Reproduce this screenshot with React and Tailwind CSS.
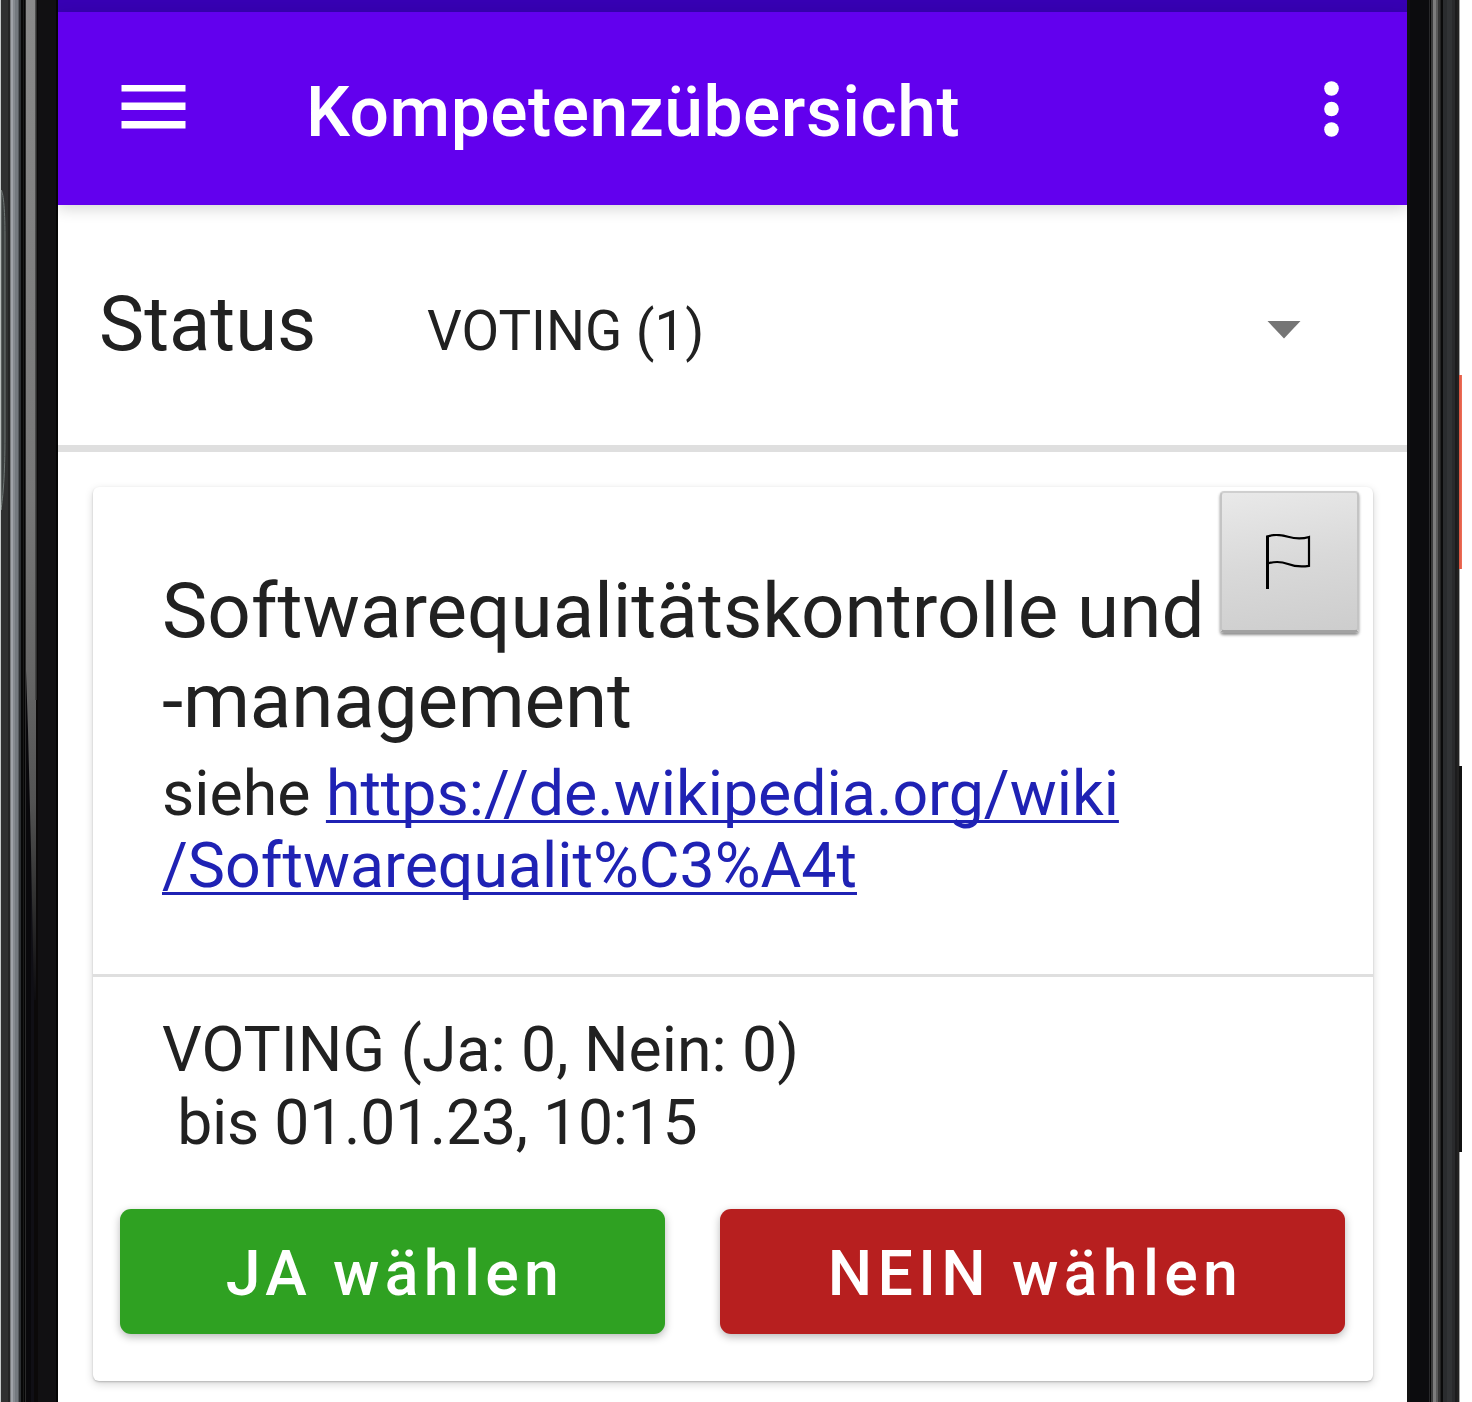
import React from "react";

function LeftBezel() {
  return (
    <div className="relative h-full w-[58px] shrink-0 bg-[linear-gradient(90deg,#c4c8c8_0_1px,#303131_1px_8px,#242525_8px_10px,#77797c_10px_11px,#9fa2a8_11px_13px,#85898f_13px_15px,#74797f_15px_18px,#565a5f_18px_19px,#2b2e31_19px_21px,#070707_21px_23px,#191919_23px_24px,#050505_24px_25px,#2a2a2a_25px_26px,#09080b_26px_31px,#100f15_31px_34px,#0b0909_34px_38px,#111012_38px_56px,#050505_56px_58px)]">
      {/* Side key highlight */}
      <svg className="absolute left-0 top-[186px]" width="8" height="328" viewBox="0 0 8 328" fill="none">
        <path d="M0 4C3 6 5 20 5 50V250C5 290 3 310 0 324Z" fill="#3c4040" />
        <path d="M1 4C3 6 5 20 5 50V250C5 290 3 310 1 324" stroke="#6f7775" strokeWidth="1" />
        <path d="M0.5 4V324" stroke="#b8bebd" strokeWidth="1.5" />
      </svg>
      {/* Reflection that tapers off toward the bottom */}
      <svg className="absolute left-[26px] top-0" width="11" height="1000" viewBox="0 0 11 1000">
        <defs>
          <linearGradient id="reflection" x1="0" y1="0" x2="0" y2="1">
            <stop offset="0" stopColor="#8a8a8a" />
            <stop offset="0.5" stopColor="#777777" />
            <stop offset="0.68" stopColor="#656565" />
            <stop offset="0.8" stopColor="#545454" />
            <stop offset="0.9" stopColor="#303030" />
            <stop offset="1" stopColor="#0d0c0f" />
          </linearGradient>
        </defs>
        <path d="M0 0H10V1000H8L5 850L2 730L0 670Z" fill="url(#reflection)" />
        <path d="M10 0V700" stroke="#3a3a3a" strokeWidth="1.5" />
      </svg>
    </div>
  );
}

function RightBezel() {
  return (
    <div className="relative h-full w-[55px] shrink-0 bg-[linear-gradient(90deg,#111112_0_3px,#0c0c0e_3px_22px,#29292b_22px_23px,#050505_23px_24px,#3c3c3c_24px_26px,#7c7c7c_26px_29px,#5a5a5a_29px_31px,#333_31px_33px,#222_33px_34px,#0a0a0a_34px_36px,#2a2c2e_36px_40px,#313335_40px_45px,#292a2c_45px_48px,#1c1c1d_48px_50px,#222_50px_52px,#a5a5a5_52px_53px,#fff_53px)]">
      <div className="absolute right-0 top-[375px] h-[194px] w-[3px] bg-[linear-gradient(90deg,#d9533e,#f0705a)]" />
      <div className="absolute right-0 top-[766px] h-[386px] w-[3px] bg-[#111]" />
    </div>
  );
}

function TopBar() {
  return (
    <header className="relative z-10 flex h-[193px] shrink-0 items-center bg-[#6200ee] pl-[63px] shadow-[0_4px_14px_rgba(0,0,0,0.16)]">
      <svg width="65" height="44" viewBox="0 0 65 44" className="mb-[4px] shrink-0" fill="#fff">
        <rect x="0.5" y="0" width="64" height="6.5" />
        <rect x="0.5" y="17.5" width="64" height="7.5" />
        <rect x="0.5" y="36" width="64" height="7.5" />
      </svg>
      <h1 className="ml-[120px] mt-[6px] text-[69.6px] font-medium leading-[70px] tracking-[0.5px] text-white">
        Kompetenzübersicht
      </h1>
      <svg width="16" height="56" viewBox="0 0 16 56" className="ml-auto mr-[68px]" fill="#fff">
        <circle cx="8.5" cy="7.5" r="7.3" />
        <circle cx="8.5" cy="28" r="7.3" />
        <circle cx="8.5" cy="48.5" r="7.3" />
      </svg>
    </header>
  );
}

function StatusRow() {
  return (
    <div className="flex h-[247px] shrink-0 items-center border-b-[7px] border-[#dfdfdf] pl-[41px]">
      <span className="mb-[2px] w-[328px] text-[76px] leading-[90px]">Status</span>
      <span className="mt-[12px] text-[54.7px] leading-[64px]">VOTING (1)</span>
      <svg width="34" height="18" viewBox="0 0 34 18" className="ml-auto mr-[106px] mt-[9px]" fill="#757575">
        <path d="M0.5 0H33.5L17 17.5Z" />
      </svg>
    </div>
  );
}

function FlagButton() {
  return (
    <button className="absolute left-[1127px] top-[4px] flex h-[142px] w-[139px] items-center justify-center rounded-[4px] border-2 border-b-[3px] border-[#c4c4c4] border-b-[#a2a2a2] border-t-[#cfcfcf] bg-[linear-gradient(170deg,#e9e9e9,#d9d9d9_50%,#cdcdcd)] shadow-[0_2px_3px_rgba(0,0,0,0.45)]">
      <svg width="46" height="56" viewBox="0 0 46 56" fill="none" stroke="#000" className="mr-[3px] mt-px">
        <path d="M2.5 1.5V55" strokeWidth="3" />
        <path d="M2.5 2.5C9 0 16 0.8 23 2.8C30 4.8 37 5.2 44 3V31.8C37 33 30 32.6 23 30C16 27.4 9 27.5 2.5 29.5" strokeWidth="2.2" />
      </svg>
    </button>
  );
}

function CompetenceCard() {
  return (
    <article className="relative ml-[35px] mt-[35px] h-[894px] w-[1280px] shrink-0 rounded-[6px] bg-white shadow-[0_1px_2px_rgba(0,0,0,0.2),0_3px_8px_rgba(0,0,0,0.17)]">
      <div className="h-[487px] pl-[69px] pt-[79px]">
        <h2 className="text-[76.4px] leading-[90px]">
          Softwarequalitätskontrolle und
          <br />
          <span className="tracking-[-0.15px]">-management</span>
        </h2>
        <p className="mt-[12px] text-[62.6px] leading-[72px]">
          siehe{" "}
          <a className="text-[#1f22b4] underline decoration-[3px] underline-offset-[5px] [text-decoration-skip-ink:none]">
            https://de.wikipedia.org/wiki
            <br />
            /Softwarequalit%C3%A4t
          </a>
        </p>
      </div>
      <div className="h-[3px] bg-[#dfdfdf]" />
      <p className="ml-[69px] mt-[36px] text-[62.5px] leading-[73px]">
        VOTING (Ja: 0, Nein: 0)
        <br />
        <span className="tracking-[-0.27px]">&nbsp;bis 01.01.23, 10:15</span>
      </p>
      <div className="ml-[27px] mt-[50px] flex gap-[55px] text-[62.6px] font-medium leading-none tracking-[5.35px] text-white">
        <button className="h-[125px] w-[545px] rounded-[11px] bg-[#2fa122] pl-[5px] pt-[5px] shadow-[0_3px_8px_rgba(0,0,0,0.28)]">
          JA wählen
        </button>
        <button className="h-[125px] w-[625px] rounded-[11px] bg-[#b71f1f] pl-[6px] pt-[5px] shadow-[0_3px_8px_rgba(0,0,0,0.28)]">
          NEIN wählen
        </button>
      </div>
      <FlagButton />
    </article>
  );
}

export default function App() {
  return (
    <div className="flex h-[1402px] w-[1472px] overflow-hidden bg-white font-[Roboto,sans-serif] text-[#212121]">
      <LeftBezel />
      <main className="flex h-full w-[1349px] shrink-0 flex-col overflow-hidden bg-white">
        <div className="h-[12px] shrink-0 bg-[#3700b3]" />
        <TopBar />
        <StatusRow />
        <CompetenceCard />
      </main>
      <RightBezel />
    </div>
  );
}
